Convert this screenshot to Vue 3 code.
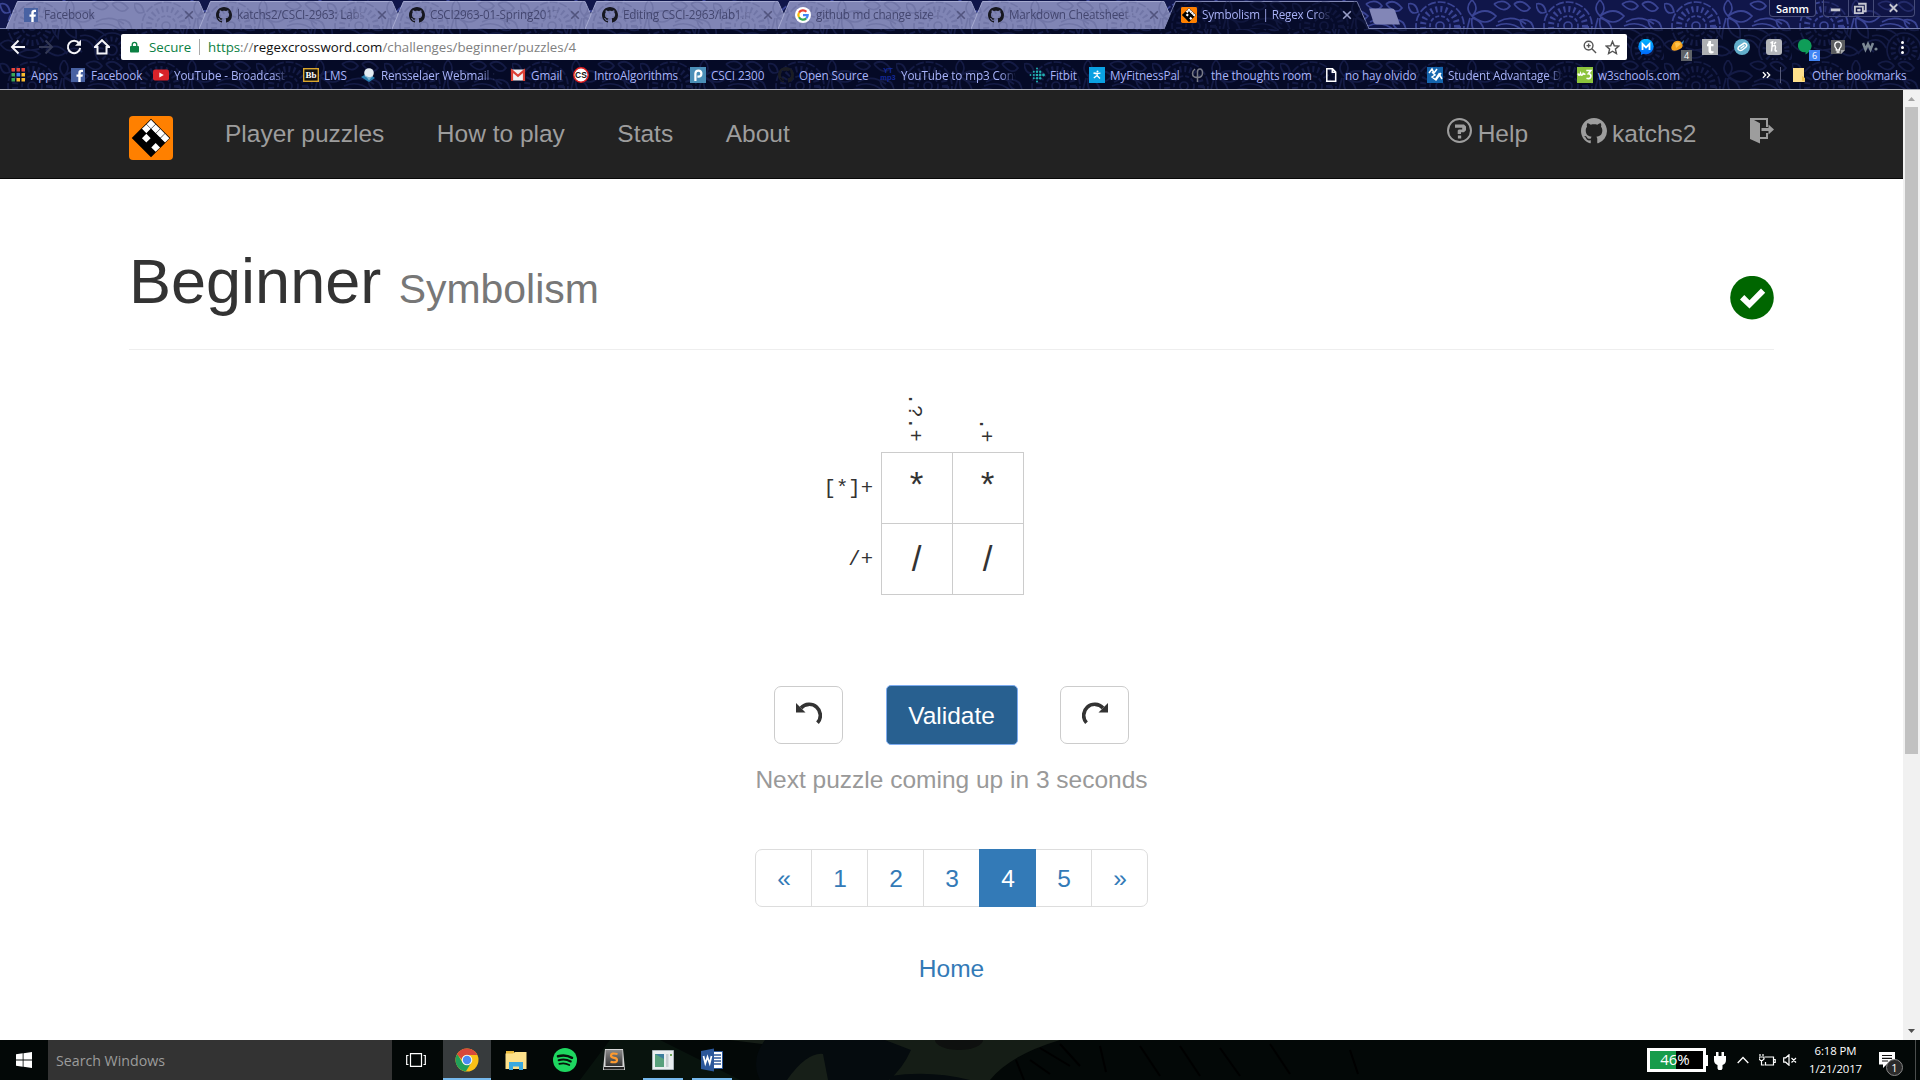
<script setup>
const tabs = [
  { icon: 'facebook', title: 'Facebook' },
  { icon: 'github', title: 'katchs2/CSCI-2963: Labs' },
  { icon: 'github', title: 'CSCI2963-01-Spring2017' },
  { icon: 'github', title: 'Editing CSCI-2963/lab1.md' },
  { icon: 'google', title: 'github md change size i' },
  { icon: 'github', title: 'Markdown Cheatsheet ·' },
  { icon: 'regex', title: 'Symbolism | Regex Crossword', active: true },
]
const bookmarks = [
  { icon: 'apps', label: 'Apps', w: 60 },
  { icon: 'facebook', label: 'Facebook', w: 83 },
  { icon: 'youtube', label: 'YouTube - Broadcast Y', w: 150, cut: true },
  { icon: 'bb', label: 'LMS', w: 57 },
  { icon: 'rpi', label: 'Rensselaer Webmail ::', w: 150, cut: true },
  { icon: 'gmail', label: 'Gmail', w: 63 },
  { icon: 'cs', label: 'IntroAlgorithms', w: 117 },
  { icon: 'piazza', label: 'CSCI 2300', w: 88 },
  { icon: 'darkhub', label: 'Open Source', w: 102 },
  { icon: 'ytmp3', label: 'YouTube to mp3 Conv', w: 149, cut: true },
  { icon: 'fitbit', label: 'Fitbit', w: 60 },
  { icon: 'mfp', label: 'MyFitnessPal', w: 101 },
  { icon: 'phi', label: 'the thoughts room', w: 134 },
  { icon: 'page', label: 'no hay olvido', w: 103 },
  { icon: 'student', label: 'Student Advantage Dis', w: 150, cut: true },
  { icon: 'w3', label: 'w3schools.com', w: 130 },
]
const extensions = [
  { icon: 'messenger' },
  { icon: 'honeybee', badge: '4', color: '#5f6368' },
  { icon: 'tumblr' },
  { icon: 'swirl' },
  { icon: 'honey' },
  { icon: 'hangouts', badge: '6', color: '#4285f4' },
  { icon: 'bulb' },
  { icon: 'wdot' },
]
const links = ['Player puzzles', 'How to play', 'Stats', 'About']
const cols = ['.?.+', '.+']
const rows = [
  { clue: '[*]+', cells: ['*', '*'] },
  { clue: '/+', cells: ['/', '/'] },
]
const pages = ['«', '1', '2', '3', '4', '5', '»']
const W = 1
const B = 0
const logoCells = [
  [W, W, B, B],
  [W, B, W, B],
  [W, B, B, B],
  [W, B, W, B],
]
const diamonds = logoCells.flatMap((r, a) => r.map((v, b) => ({ v, x: a * 6.6, y: b * 6.6 })))
const apps = [
  { icon: 'chrome', state: 'focus' },
  { icon: 'explorer' },
  { icon: 'spotify' },
  { icon: 'sublime' },
  { icon: 'window', state: 'open' },
  { icon: 'word', state: 'open' },
]
</script>

<template>
  <div class="screen">
    <svg class="defs" aria-hidden="true">
      <defs>
        <pattern v-for="p in [['dim', '#141b45'], ['lit', '#3a4494'], ['tabs', '#6b70a1']]" :id="'floral-' + p[0]" :key="p[0]" width="128" height="60" patternUnits="userSpaceOnUse">
          <g fill="none" :stroke="p[1]" stroke-width="1.7">
            <circle cx="32" cy="26" r="4" />
            <circle cx="32" cy="26" r="10" stroke-dasharray="4 2" />
            <circle cx="32" cy="26" r="17" stroke-width="6" stroke-dasharray="2 3" />
            <circle cx="32" cy="26" r="24" stroke-dasharray="8 2" />
            <path d="M64 0q8 8 0 16q-8-8 0-16M64 16q14-10 24 0q-10 12-24 0M64 18q14 4 12 20q-14-4-12-20M62 18q-4 14-4 20q-6-6-6-12M86 4q10-6 16 2q-6 8-16-2M90 22q14-8 28 2M88 26q14-6 26 4M84 30q12-4 22 6M80 36q10-3 18 6M76 42q12-6 18 6" />
            <circle cx="112" cy="50" r="5" /><circle cx="112" cy="50" r="11" stroke-width="5" stroke-dasharray="2 3" /><circle cx="112" cy="50" r="17" />
            <path d="M0 44q10-8 16 2q-6 10-16-2M18 54q12-8 22 0q-8 8-22 0M46 50q10-8 20 2q-8 8-20-2M106 4q8-6 16 4q-6 8-16-4M112 20q12-2 14 10q-12 2-14-10M0 4q8-2 10 8q-8 4-10-8M66 54q6-10 16-2" />
          </g>
        </pattern>
        <linearGradient id="gMsg" x1="0" y1="0" x2="0" y2="1"><stop offset="0" stop-color="#00b8ff" /><stop offset="1" stop-color="#0068ff" /></linearGradient>
        <linearGradient id="gSub" x1="0" y1="0" x2="0" y2="1"><stop offset="0" stop-color="#8a8a8a" /><stop offset="1" stop-color="#333" /></linearGradient>
      </defs>
      <symbol id="github" viewBox="0 0 16 16"><path fill="currentColor" d="M8 0C3.58 0 0 3.58 0 8c0 3.54 2.29 6.53 5.47 7.59.4.07.55-.17.55-.38 0-.19-.01-.82-.01-1.49-2.01.37-2.53-.49-2.69-.94-.09-.23-.48-.94-.82-1.13-.28-.15-.68-.52-.01-.53.63-.01 1.08.58 1.23.82.72 1.21 1.87.87 2.33.66.07-.52.28-.87.51-1.07-1.78-.2-3.64-.89-3.64-3.95 0-.87.31-1.59.82-2.15-.08-.2-.36-1.02.08-2.12 0 0 .67-.21 2.2.82.64-.18 1.32-.27 2-.27.68 0 1.36.09 2 .27 1.53-1.04 2.2-.82 2.2-.82.44 1.1.16 1.92.08 2.12.51.56.82 1.27.82 2.15 0 3.07-1.87 3.75-3.65 3.95.29.25.54.73.54 1.48 0 1.07-.01 1.93-.01 2.2 0 .21.15.46.55.38A8.013 8.013 0 0016 8c0-4.42-3.58-8-8-8z" /></symbol>
      <symbol id="darkhub" viewBox="0 0 16 16"><use href="#github" width="16" height="16" color="#1b1d24" /></symbol>
      <symbol id="facebook" viewBox="0 0 16 16"><path fill="#4862a3" d="M1 1h14v14H1z" /><path fill="#fff" d="M8.300 15V9.800H6.500V7.600h1.800V6c0-2.100 1.200-3.200 3-3.200.9 0 1.700.1 1.700.1v2h-1c-1 0-1.300.6-1.300 1.200v1.500h2.200l-.4 2.200h-1.800V15z" /></symbol>
      <symbol id="google" viewBox="0 0 16 16"><circle cx="8" cy="8" r="8" fill="#fff" /><g fill="none" stroke-width="2.200"><path stroke="#ea4335" d="M4 5.600A4.700 4.700 0 0 1 11.400 4.700" /><path stroke="#fbbc05" d="M4 10.300A4.700 4.700 0 0 1 4 5.600" /><path stroke="#34a853" d="M11.200 11.400A4.700 4.700 0 0 1 4 10.300" /><path stroke="#4285f4" d="M8 8.100h4.700A4.700 4.700 0 0 1 11.200 11.400" /></g></symbol>
      <symbol id="regex" viewBox="0 0 44 44">
        <rect width="44" height="44" rx="4" fill="#ff8000" />
        <g transform="translate(22 3.200) rotate(45)">
          <rect x="-.3" y="-.3" width="27.200" height="27.200" fill="#000" />
          <rect v-for="(d, i) in diamonds" :key="i" :x="d.x + .4" :y="d.y + .4" width="6.200" height="6.200" :fill="d.v ? '#fff' : '#000'" />
        </g>
      </symbol>
      <symbol id="apps" viewBox="0 0 16 16"><path fill="#e8453c" d="M1.500 1H5v3.500H1.500zM6.500 1H10v3.500H6.500zM11.500 1H15v3.500h-3.500z" /><path fill="#3aa757" d="M1.500 6H5v3.500H1.500zM1.500 11H5v3.500H1.500z" /><path fill="#4285f4" d="M6.500 6H10v3.500H6.500z" /><path fill="#f9bb2d" d="M11.500 6H15v3.500h-3.500zM6.500 11H10v3.500H6.500zM11.500 11H15v3.500h-3.500z" /></symbol>
      <symbol id="youtube" viewBox="0 0 16 16"><rect y="2.500" width="16" height="11" rx="2" fill="#d8232a" /><path fill="#fff" d="M6.300 5.500l4.500 2.500-4.500 2.500z" /></symbol>
      <symbol id="bb" viewBox="0 0 16 16"><rect x=".7" y="1.700" width="14.600" height="12.600" fill="#111" stroke="#d9a62e" stroke-width="1.400" /></symbol>
      <symbol id="rpi" viewBox="0 0 16 16"><path fill="#2a7fb0" d="M1 10l7-4 7 5-6 4z" /><circle cx="9" cy="6" r="4.800" fill="#e4edf3" /><path fill="#7fb3d0" d="M5 8q4 4 8 .5l-4 5z" /></symbol>
      <symbol id="gmail" viewBox="0 0 16 16"><path fill="#f2f2f2" d="M1 2.500h14v11H1z" /><path fill="none" stroke="#dc4236" stroke-width="2.200" d="M2 14V3.600l6 5.200 6-5.200V14" /></symbol>
      <symbol id="cs" viewBox="0 0 16 16"><circle cx="8" cy="8" r="7.200" fill="#fff" stroke="#e11f1f" stroke-width="1.500" /></symbol>
      <symbol id="piazza" viewBox="0 0 16 16"><path fill="#4b8fb8" d="M0 0h16v16H0z" /><path fill="none" stroke="#fff" stroke-width="2.200" d="M5.400 14V6.500a3 3 0 1 1 3 3.200h-1" /></symbol>
      <symbol id="ytmp3" viewBox="0 0 16 16"></symbol>
      <symbol id="fitbit" viewBox="0 0 16 16"><g fill="#22b0b2"><circle cx="8" cy="1.500" r="1" /><circle cx="8" cy="4.700" r="1.200" /><circle cx="8" cy="8" r="1.300" /><circle cx="8" cy="11.300" r="1.200" /><circle cx="8" cy="14.500" r="1" /><circle cx="11.200" cy="4.700" r="1.200" /><circle cx="11.200" cy="8" r="1.400" /><circle cx="11.200" cy="11.300" r="1.200" /><circle cx="4.800" cy="4.700" r="1" /><circle cx="4.800" cy="8" r="1.100" /><circle cx="4.800" cy="11.300" r="1" /><circle cx="14.500" cy="8" r="1.400" /><circle cx="1.500" cy="8" r=".9" /></g></symbol>
      <symbol id="mfp" viewBox="0 0 16 16"><path fill="#0aa1e2" d="M0 0h16v16H0z" /><circle cx="8.500" cy="4.600" r="1" fill="#fff" /><path stroke="#fff" stroke-width="1.300" fill="none" d="M4.500 6q4 1 7 0M8.200 6.500v2.300l2.800 2.700M8 8.500L4.800 11" /></symbol>
      <symbol id="phi" viewBox="0 0 16 16"><path fill="none" stroke="#777a86" stroke-width="1.500" d="M5 2Q2.500 4 2.500 6.500q0 4 5 4t5-4.500Q12.500 2 9.800 2 7.500 2 7.500 5v10" /></symbol>
      <symbol id="page" viewBox="0 0 16 16"><path fill="none" stroke="#fff" stroke-width="1.500" d="M2.800 1.800h5.700l3.200 3.200v9.200H2.800zM8.300 2v3.300h3.400" /></symbol>
      <symbol id="student" viewBox="0 0 16 16"><path fill="#1565ae" d="M0 0h16v16H0z" /><path fill="none" stroke="#fff" stroke-width="1.500" d="M2 6l3-4 2 4 3-4M5 5l3 3-3 2 4 3 5-7M8 13l4-6 3 5" /></symbol>
      <symbol id="w3" viewBox="0 0 16 16"><path fill="#8cc43c" d="M0 0h16v16H0z" /><path fill="none" stroke="#fff" stroke-width="1.700" d="M1 6.500q1 3.500 2.500 0q1 3.500 2.700 0q1 1 2.200.3M9.300 3.500h4.500l-2.500 3.200q3 .3 2.500 3-.8 2.800-4.300 1.600" /></symbol>
      <symbol id="messenger" viewBox="0 0 16 16"><circle cx="8" cy="7.500" r="7.700" fill="url(#gMsg)" /><path fill="#0072ff" d="M3 13v3l4-2z" /><path fill="none" stroke="#fff" stroke-width="1.800" d="M4.500 11V5L8 8.500 11.500 5v6" /></symbol>
      <symbol id="honeybee" viewBox="0 0 16 16"><path fill="#f5a11c" d="M4 3q5-3 8 1 2 4-2 6-5 3-8 1-2-3 2-8z" /><path fill="#ffc34d" d="M5 4q4-2 6 1l-5 4z" /><path fill="#3c8fc9" d="M11 4l3-3-1 4zM11 11l5 1-3 3z" /></symbol>
      <symbol id="tumblr" viewBox="0 0 16 16"><path fill="#aeb0b4" d="M0 0h16v16H0z" /><path fill="#fff" d="M6.500 2H9v3h2.500v2.300H9V11q0 1.700 2.500 1v2q-5 1.500-5-2.500V7.300H5V5.500q1.500-.7 1.500-3.500z" /></symbol>
      <symbol id="swirl" viewBox="0 0 16 16"><circle cx="8" cy="8" r="8" fill="#62aecb" /><path fill="none" stroke="#fff" stroke-width="1.500" d="M10.500 4L5 7.500q-2 2 0 3.500t4.500-1L12 8q1.500-2 0-3.200T8.500 5.500M6.500 9.500l4-3" /></symbol>
      <symbol id="honey" viewBox="0 0 16 16"><rect width="16" height="16" rx="3" fill="#b4b6ba" /><path fill="none" stroke="#fff" stroke-width="1.500" d="M4.500 4l2-1-1 9.500M5.500 8q4-3 4 0l-.4 3q0 1.500 2 .7M8 5l2-2" /></symbol>
      <symbol id="hangouts" viewBox="0 0 16 16"><path fill="#0f9d58" d="M7 0a6.600 6.600 0 0 1 6.600 6.600Q13.600 12 7.500 15.500v-2.400A6.600 6.600 0 1 1 7 0z" /></symbol>
      <symbol id="bulb" viewBox="0 0 16 16"><path fill="#5c5e61" d="M1 1h14v10l-4 4H1z" /><path fill="#a5a7aa" d="M15 11l-4 4v-4z" /><path fill="none" stroke="#fff" stroke-width="1.300" d="M6.300 9.500Q4.500 8 4.800 6a3.200 3.200 0 0 1 6.400 0q.2 2-1.700 3.500v1.500H6.300zM6.500 13h3" /></symbol>
      <symbol id="wdot" viewBox="0 0 16 16"><path fill="none" stroke="#7c8894" stroke-width="2.500" d="M1 4l2.500 6.500L6 5l2.500 5.500L11 4" /><circle cx="14" cy="10" r="1.600" fill="#7c8894" /></symbol>
      <symbol id="chrome" viewBox="0 0 24 24"><circle cx="12" cy="12" r="11.500" fill="#fbc116" /><path fill="#21a05a" d="M12 .5L2 6.300a11.500 11.500 0 0 0 8.800 17.100L16.400 14.600 12 12 7.500 14.500 2.300 5.900z" /><path fill="#d9483b" d="M2 6.300A11.500 11.500 0 0 1 22.300 7H12a5 5 0 0 0-5 4.500z" /><circle cx="12" cy="12" r="5.300" fill="#f4f4f4" /><circle cx="12" cy="12" r="4.200" fill="#4a8af4" /></symbol>
      <symbol id="explorer" viewBox="0 0 24 24"><path fill="#e9b93a" d="M2 3h8v4H2z" /><path fill="#fde08a" d="M1.500 5.500H9L11 4h11.500v17H1.500z" /><path fill="#39a9e0" d="M5 22v-8h14v8h-4v-3.500H9V22z" /></symbol>
      <symbol id="spotify" viewBox="0 0 24 24"><circle cx="12" cy="12" r="12" fill="#1ed760" /><g fill="none" stroke="#07130b" stroke-linecap="round"><path stroke-width="2.500" d="M5 8.300q7.500-2.300 14 1.500" /><path stroke-width="2.100" d="M5.700 12.200q6.500-1.900 12 1.300" /><path stroke-width="1.700" d="M6.300 15.900q5.500-1.500 10 1.100" /></g></symbol>
      <symbol id="sublime" viewBox="0 0 24 24"><path fill="#d6d6d6" d="M3 1h18l2 21H1z" /><path fill="url(#gSub)" d="M3.500 2h17v16h-17z" /><path fill="#222" d="M2 19h20v2.500H2z" /><path fill="none" stroke="#ff9a2e" stroke-width="2.200" d="M15.500 6Q9 4.500 9 7.500q0 2 3 2.300t3 2.400q0 3-6.500 1.600" /></symbol>
      <symbol id="window" viewBox="0 0 24 24"><path fill="#e9eef0" stroke="#a9b3b8" d="M1.500 2.500h21v19h-21z" /><path fill="#58a07c" d="M4 6h9v13H4z" /><path fill="#3c7d9d" d="M4 6h9v5z" /><path fill="#c6ced2" d="M15 6h2.500v13H15z" /><path fill="#6ea858" d="M19 6h2v2h-2z" /></symbol>
      <symbol id="word" viewBox="0 0 24 24"><path fill="#fff" stroke="#2b579a" d="M12 3.500h10.500v17H12z" /><path stroke="#2b579a" stroke-width="1.400" d="M14 7h7M14 10h7M14 13h7M14 16h7" /><path fill="#2b579a" d="M1 3l13-2.500v23L1 21z" /><path fill="none" stroke="#fff" stroke-width="1.700" d="M3.500 8l1.800 7.500L7.500 9l2.200 6.500L11.500 8" /></symbol>
    </svg>

    <header class="chrome">
      <svg class="paper"><rect width="1920" height="90" fill="url(#floral-dim)" /><rect width="1920" height="29" fill="#10164a" /><rect width="1920" height="29" fill="url(#floral-lit)" /></svg>
      <div class="strip">
        <div v-for="(t, i) in tabs" :key="i" class="tab" :class="{ active: t.active }">
          <svg class="shape" viewBox="0 0 205 29"><path d="M0 29L11.500 1.500H193L205 29" /><path class="tint" d="M0 29L11.500 1.500H193L205 29" /></svg>
          <svg class="fav"><use :href="'#' + t.icon" /></svg>
          <span class="title">{{ t.title }}</span>
          <svg class="x" viewBox="0 0 10 10"><path d="M1.200 1.200l7.600 7.600M8.800 1.200L1.200 8.800" /></svg>
        </div>
        <svg class="newtab" viewBox="0 0 34 17"><path d="M2 .5h23q2 0 3 2l5 14H10q-2.500 0-3.500-2z" /></svg>
        <div class="winctl">
          <span class="user">Samm</span>
          <div class="btns">
            <svg viewBox="0 0 25 17"><path d="M7 9h10v3H7z" /></svg>
            <svg viewBox="0 0 25 17"><path d="M9.500 4h8v8h-3M6 7h8.500v7H6z" class="ln" /><path d="M8.500 9.500h3.500v2.500H8.500z" /></svg>
            <svg viewBox="0 0 40 17"><path d="M15.500 4.500l8 8M23.500 4.500l-8 8" class="ln" /></svg>
          </div>
        </div>
      </div>

      <div class="toolbar">
        <svg viewBox="0 0 16 16" class="nav"><path d="M15 8H2.500M8.500 1.500L2 8l6.500 6.500" /></svg>
        <svg viewBox="0 0 16 16" class="nav dim"><path d="M1 8h12.500M7.500 1.500L14 8l-6.500 6.500" /></svg>
        <svg viewBox="0 0 16 16" class="nav"><path d="M13 4.200A6.200 6.200 0 1 0 14.200 9" /><path d="M15 .8v6H9z" class="solid" /></svg>
        <svg viewBox="0 0 16 16" class="nav"><path d="M8 1.200L1 8h2.500v6.500h9V8H15z" /></svg>
        <div class="omni">
          <svg class="lock" viewBox="0 0 10 12"><path fill="#0b8043" d="M1 5h8q1 0 1 1v5q0 1-1 1H1q-1 0-1-1V6q0-1 1-1z" /><path fill="none" stroke="#0b8043" stroke-width="1.500" d="M2.500 5V3.300a2.500 2.500 0 0 1 5 0V5" /></svg>
          <span class="secure">Secure</span><i class="bar"></i>
          <span class="url"><span class="green">https</span>://<b>regexcrossword.com</b>/challenges/beginner/puzzles/4</span>
          <svg class="mag" viewBox="0 0 15 15"><g fill="none" stroke="#555" stroke-width="1.500"><circle cx="6" cy="6" r="4.700" /><path d="M9.500 9.500l4.500 4.500M3.800 6h4.400M6 3.800v4.400" /></g></svg>
          <svg class="star" viewBox="0 0 16 16"><path fill="none" stroke="#555" stroke-width="1.500" d="M8 1.500l1.900 4.600 4.900.4-3.700 3.200 1.100 4.800L8 12l-4.200 2.500 1.100-4.800L1.200 6.500l4.900-.4z" /></svg>
        </div>
        <div class="exts">
          <div v-for="e in extensions" :key="e.icon" class="ext">
            <svg><use :href="'#' + e.icon" /></svg>
            <span v-if="e.badge" class="badge" :style="{ background: e.color }">{{ e.badge }}</span>
          </div>
        </div>
        <div class="dots"><i></i><i></i><i></i></div>
      </div>

      <div class="marks">
        <div v-for="b in bookmarks" :key="b.icon" class="mark" :style="{ width: b.w + 'px' }">
          <div class="mi">
            <svg><use :href="'#' + b.icon" /></svg>
            <b v-if="b.icon === 'bb'" class="tbb">Bb</b>
            <b v-if="b.icon === 'cs'" class="tcs">CS</b>
            <b v-if="b.icon === 'ytmp3'" class="tyt">YT<br />mp3</b>
          </div>
          <span :class="{ cut: b.cut }">{{ b.label }}</span>
        </div>
        <svg class="more" viewBox="0 0 10 8"><path d="M1 .8L4 4 1 7.200M5.500 .8l3 3.200-3 3.200" /></svg>
        <i class="sep"></i>
        <svg class="folder" viewBox="0 0 13 15"><path fill="#ffe08c" d="M0 1h11v10l1 4H0z" /><path fill="#f3c64f" d="M9 9l3 2v3H9z" /></svg>
        <span class="other">Other bookmarks</span>
      </div>
    </header>

    <div class="view">
      <div class="page">
        <nav class="navbar">
          <svg class="logo"><use href="#regex" /></svg>
          <a v-for="l in links" :key="l">{{ l }}</a>
          <div class="right">
            <a class="help"><svg viewBox="0 0 26 26"><circle cx="12.500" cy="12.500" r="11.500" fill="none" stroke="currentColor" stroke-width="2" /><path fill="currentColor" d="M8 6.500h9l2 2v3.800l-2 2h-3V16h-3.300v-3.500l1-1h3.500V9.700H8zM10.900 17.500h3.300v3h-3.300z" /></svg>Help</a>
            <a class="me"><svg><use href="#github" /></svg>katchs2</a>
            <a class="out"><svg viewBox="0 0 25 26"><path fill="currentColor" d="M1 0h18v9h-2V2H5l6 3.200V25.500L1 21z" /><path fill="currentColor" d="M11 19h6v-4h2v6h-8zM12.500 10h7V6.500l5.500 5-5.500 5V13h-7z" /></svg></a>
          </div>
        </nav>

        <main>
          <div class="heading">
            <h1>Beginner <small>Symbolism</small></h1>
            <svg class="done" viewBox="0 0 44 44"><circle cx="22" cy="21.700" r="21.800" fill="#060" /><path fill="#fff" d="M10 23.500l4.300-4.500 5.200 5.200L31 12.500l4.200 4.300L19.500 32.500z" /></svg>
          </div>

          <div class="puzzle">
            <i></i>
            <div v-for="c in cols" :key="c" class="colclue"><span>{{ c }}</span></div>
            <i></i>
            <template v-for="(r, y) in rows" :key="y">
              <div class="rowclue">{{ r.clue }}</div>
              <div v-for="(v, x) in r.cells" :key="x" class="cell" :class="{ high: v === '*' }">{{ v }}</div>
              <i></i>
            </template>
          </div>

          <div class="actions">
            <button class="btn"><svg viewBox="0 0 26 23"><path fill="none" stroke="#333" stroke-width="3.600" d="M5 6A11 11 0 0 1 21.500 20.800" /><path fill="#333" d="M0 1v9.500h9.500z" /></svg></button>
            <button class="btn primary">Validate</button>
            <button class="btn"><svg class="flip" viewBox="0 0 26 23"><path fill="none" stroke="#333" stroke-width="3.600" d="M5 6A11 11 0 0 1 21.500 20.800" /><path fill="#333" d="M0 1v9.500h9.500z" /></svg></button>
          </div>
          <p class="next">Next puzzle coming up in 3 seconds</p>
          <div class="pager"><a v-for="p in pages" :key="p" :class="{ on: p === '4' }">{{ p }}</a></div>
          <a class="home">Home</a>
        </main>
      </div>
      <div class="scroll">
        <svg viewBox="0 0 17 17"><path fill="#a3a3a3" d="M5 11l3.500-4 3.500 4z" /></svg>
        <i class="thumb"></i>
        <svg viewBox="0 0 17 17"><path fill="#505050" d="M5 6l3.500 4L12 6z" /></svg>
      </div>
    </div>

    <footer class="taskbar">
      <svg class="wall" viewBox="0 0 1920 40"><path fill="#0b1a12" d="M610 0h50l80 40H580z" opacity=".6" /><path fill="#151d16" d="M730 0h330q-50 15-70 40H790q10-20 20-30z" /><path fill="#050b0e" d="M765 0h120l26 10q-8 18-22 30H760q-10-20 5-40zM890 36q40-6 80 4h-80z" /><ellipse cx="959" cy="0" rx="24" ry="10" fill="#0e100f" /><path fill="#171f18" d="M787 40q20-28 36-26l5 26z" /><path stroke="#000" stroke-width="2" fill="none" d="M1016 20l8 20M1030 20l20 14M1040 8l30 18M1060 4l20 22M1100 6l6 26M1140 6l20 30M1180 6l20 30M1220 8l20 28M1270 4l20 30M1350 10l8 24" /></svg>
      <div class="start"><svg viewBox="0 0 16 16"><path fill="#fff" d="M0 2.200l6.700-.9v6.300H0zM7.500 1.200L16 0v7.600H7.500zM0 8.400h6.700v6.300L0 13.800zM7.500 8.400H16V16l-8.500-1.200z" /></svg></div>
      <div class="search">Search Windows</div>
      <div class="taskview"><svg viewBox="0 0 20 14"><path fill="none" stroke="#fff" stroke-width="1.200" d="M4.500.6h11v12.800h-11zM2.500 2.500H.7v9h1.800M17.500 2.500h1.800v9h-1.800" /></svg></div>
      <div v-for="a in apps" :key="a.icon" class="app" :class="a.state"><svg><use :href="'#' + a.icon" /></svg></div>
      <div class="tray">
        <div class="battery"><span>46%</span></div><i class="nub"></i>
        <svg class="plug" viewBox="0 0 12 18"><path fill="#fff" d="M2 0h2.500v4h3V0H10v4h2v4q0 4-3.500 5v3.500l-1 1.500h-3l-1-1.500V13Q0 12 0 8V4h2z" /></svg>
        <svg class="chev" viewBox="0 0 12 8"><path fill="none" stroke="#fff" stroke-width="1.300" d="M.7 7L6 1.500 11.300 7" /></svg>
        <svg class="bat" viewBox="0 0 17 12"><path fill="none" stroke="#fff" stroke-width="1.200" d="M6 3h8.500v8H6.500V8M14.500 5.500h1.700v3h-1.700M1 0v2M4 0v2M0 3h5v2L3.500 6.500h-2L0 5zM2.500 6.500V11h3" /></svg>
        <svg class="spk" viewBox="0 0 14 12"><path fill="none" stroke="#fff" stroke-width="1.200" d="M.7 3.800h2L6 .8v10.400L2.700 8.200h-2zM8.500 4l4.500 4.500M13 4L8.500 8.500" /></svg>
        <div class="clock"><span>6:18 PM</span><span>1/21/2017</span></div>
        <div class="notes"><svg viewBox="0 0 16 16"><path fill="#fff" d="M0 0h16v12.500H7.500L4 16v-3.500H0z" /><path stroke="#111" stroke-width="1.200" d="M3 3.500h10M3 6.300h10M3 9h6" /></svg><span>1</span></div>
      </div>
    </footer>
  </div>
</template>

<style>
body { margin: 0; overflow: hidden; }
</style>

<style scoped>
* { box-sizing: border-box; }
svg { display: block; flex: none; }
i { font-style: normal; }
.screen { width: 1920px; height: 1080px; display: flex; flex-direction: column; overflow: hidden; background: #fff; font-family: "Liberation Sans", Arial, sans-serif; }
.defs { position: absolute; width: 0; height: 0; }

.chrome { position: relative; height: 90px; flex: none; background: #050a26; border-bottom: 1px solid #a9abb5; font-family: "Open Sans", "Noto Sans", sans-serif; font-size: 11.7px; letter-spacing: -.1px; }
.paper { position: absolute; left: 0; top: 0; width: 1920px; height: 89px; }
.strip { position: relative; display: flex; height: 29px; padding-left: 6px; border-bottom: 1px solid #7880b0; }
.tab { position: relative; display: flex; align-items: center; width: 205px; height: 29px; margin-right: -12px; padding: 1px 0 0 17px; color: #43466f; letter-spacing: -.2px; }
.shape { position: absolute; left: 0; top: 0; width: 205px; height: 29px; }
.shape path { fill: #8085b5; stroke: #a5aad0; stroke-width: 1; }
.shape .tint { fill: url(#floral-tabs); stroke: none; opacity: .7; }
.active .shape path { fill: #060b2a; stroke: #8288b5; }
.active .shape .tint { fill: url(#floral-dim); stroke: none; }
.active { color: #a8b0f5; }
.fav { position: relative; width: 16px; height: 16px; color: #16171f; }
.title { position: relative; top: -1px; width: 130px; margin: 0 10px 0 5px; overflow: hidden; white-space: nowrap; mask-image: linear-gradient(90deg, #000 112px, transparent 130px); }
.x { position: relative; width: 10px; height: 10px; }
.x path { stroke: #51547e; stroke-width: 1.6; }
.active .x path { stroke: #9a9fc8; }
.newtab { width: 34px; height: 17px; margin: 8px 0 0 10px; fill: #8286b7; }
.winctl { display: flex; height: 17px; margin-left: auto; margin-right: 5px; gap: 7px; }
.user { width: 47px; height: 17px; border: 1px solid #454b78; border-top: 0; border-radius: 0 0 4px 4px; background: #0d1240; color: #fff; font-size: 11px; font-weight: 600; line-height: 18px; text-align: center; }
.btns { display: flex; border: 1px solid #454b78; border-top: 0; border-radius: 0 0 4px 4px; background: #0d124080; }
.btns svg { width: 25px; height: 16px; border-right: 1px solid #454b78; fill: #c4c5cf; }
.btns svg:nth-child(3) { width: 40px; border: 0; }
.btns .ln { fill: none; stroke: #c4c5cf; stroke-width: 2; }

.toolbar { position: relative; display: flex; align-items: center; height: 36px; padding-left: 10px; letter-spacing: 0; }
.nav { width: 16px; height: 16px; margin-right: 12px; fill: none; stroke: #f4f4f8; stroke-width: 2; }
.nav .solid { fill: #f4f4f8; stroke: none; }
.dim { stroke: #343955; }
.omni { display: flex; align-items: center; width: 1506px; height: 26px; margin-left: -1px; padding-left: 9px; background: #fff; border-radius: 2px; font-size: 13.3px; color: #808080; white-space: nowrap; }
.lock { width: 9px; height: 12px; }
.secure { width: 50px; margin-left: 10px; color: #0b8043; }
.bar { width: 1px; height: 16px; background: #aaa; }
.url { margin-left: 8px; }
.url b { font-weight: 400; color: #111; }
.green { color: #0b8043; }
.mag { width: 14px; height: 14px; margin-left: auto; }
.star { width: 15px; height: 15px; margin: 0 7px 0 8px; }
.exts { display: flex; gap: 16px; margin-left: 11px; }
.ext { position: relative; }
.ext svg { width: 16px; height: 16px; }
.badge { position: absolute; left: 11px; top: 11px; width: 11px; height: 11px; font-size: 9px; line-height: 11px; text-align: center; color: #fff; }
.dots { display: flex; flex-direction: column; gap: 2px; margin-left: 23px; }
.dots i { width: 3px; height: 3px; border-radius: 2px; background: #fff; }

.marks { position: relative; display: flex; align-items: center; height: 19px; padding-left: 10px; color: #a9b4fa; white-space: nowrap; }
.mark { display: flex; align-items: center; gap: 5px; flex: none; }
.mi { position: relative; width: 16px; height: 16px; }
.mi svg { width: 16px; height: 16px; }
.mi b { position: absolute; left: 0; top: 0; width: 16px; text-align: center; letter-spacing: 0; }
.tbb { font: 700 9px/16px "Liberation Serif", serif; color: #fff; }
.tcs { font: 700 8.5px/16px "Liberation Sans", sans-serif; color: #111; }
.tyt { font: 700 7.500px/7.500px "Liberation Sans", sans-serif; color: #14299a; }
.cut { width: 115px; overflow: hidden; mask-image: linear-gradient(90deg, #000 99px, transparent 115px); }
.more { width: 9px; height: 8px; margin-left: 55px; fill: none; stroke: #fff; stroke-width: 1.6; }
.sep { width: 1px; height: 16px; margin: 0 12px 0 9px; background: #565a78; }
.folder { width: 13px; height: 15px; }
.other { margin-left: 6px; }

.view { display: flex; height: 950px; flex: none; }
.page { width: 1903px; font-size: 24.5px; line-height: 35px; color: #333; }
.navbar { display: flex; height: 89px; padding: 26px 129px 0; background: #222; border-bottom: 1px solid #080808; color: #9d9d9d; }
.navbar a { margin-left: 52.5px; }
.logo { width: 44px; height: 44px; }
.logo + a { margin-left: 52px; }
.right { display: flex; margin-left: auto; }
.right a { display: flex; }
.right svg { margin-top: 2px; }
.help svg { width: 26px; height: 26px; margin-right: 5px; }
.me svg { width: 26px; height: 26px; margin-right: 5.5px; }
.out svg { width: 25px; height: 26px; }

main { display: flex; flex-direction: column; align-items: center; }
.heading { display: flex; align-items: flex-start; justify-content: space-between; width: 1645px; height: 171px; padding-top: 68px; border-bottom: 1px solid #eee; }
h1 { margin: 0; font-size: 63px; line-height: 69.3px; font-weight: 400; }
small { font-size: 40.95px; color: #777; }
.done { width: 44px; height: 44px; margin-top: 29px; }
.puzzle { display: grid; grid-template-columns: 120px 71px 72px 118px; grid-template-rows: 102px 71px 72px; }
.colclue { display: flex; justify-content: center; align-items: flex-end; padding: 0 6px 10px 0; font: 20.3px/24px "Liberation Mono", monospace; }
.colclue span { writing-mode: vertical-rl; text-orientation: sideways; }
.rowclue { padding: 0 8px 0 0; text-align: right; font: 20.6px/73px "Liberation Mono", monospace; }
.cell { padding-right: 1px; border: solid #ccc; border-width: 1px 0 0 1px; text-align: center; font-size: 35px; line-height: 70px; }
.high { line-height: 62px; }
.cell:nth-child(7), .cell:nth-child(11) { border-right-width: 1px; }
.cell:nth-child(10), .cell:nth-child(11) { border-bottom-width: 1px; }
.actions { display: flex; align-items: center; gap: 42.5px; height: 60px; margin-top: 90px; }
.btn { display: flex; justify-content: center; width: 69px; height: 58px; padding: 15px 0 0; background: #fff; border: 1px solid #ccc; border-radius: 7px; font: inherit; }
.btn svg { width: 26px; height: 23px; }
.flip { transform: scaleX(-1); }
.primary { width: 132px; height: 60px; padding: 12px 0 0; background: #286090; border: 1px solid #7eacf0; border-radius: 5px; color: #fff; line-height: 35px; }
.next { margin: 17px 0 0; color: #999; }
.pager { display: flex; margin-top: 52px; height: 58px; color: #337ab7; }
.pager a { width: 57px; margin-right: -1px; padding: 11px 0 0 1px; text-align: center; border: 1px solid #ddd; }
.pager a:first-child { border-radius: 7px 0 0 7px; }
.pager a:last-child { margin-right: 0; border-radius: 0 7px 7px 0; }
.pager .on { position: relative; background: #337ab7; border-color: #337ab7; color: #fff; }
.home { margin-top: 44px; color: #337ab7; }
.scroll { display: flex; flex-direction: column; width: 17px; background: #f1f1f1; }
.scroll svg { width: 17px; height: 17px; }
.thumb { width: 13px; height: 647px; margin: 0 2px auto; background: #c1c1c1; }

.taskbar { position: relative; display: flex; height: 40px; flex: none; background: #030807; font-family: "Open Sans", "Noto Sans", sans-serif; color: #fff; }
.wall { position: absolute; left: 0; top: 0; width: 1920px; height: 40px; }
.start, .search, .taskview, .app, .tray { position: relative; display: flex; align-items: center; }
.start { width: 48px; padding-left: 16px; }
.start svg { width: 16px; height: 16px; }
.search { width: 344px; padding-left: 8px; background: #333; color: #9c9c9c; font-size: 14.2px; }
.taskview { width: 51px; padding-left: 14px; }
.taskview svg { width: 20px; height: 14px; }
.app { justify-content: center; width: 48px; margin-right: 1px; border-bottom: 2px solid transparent; }
.app svg { width: 24px; height: 24px; margin-top: 1px; }
.focus { background: #373b3d; border-color: #76b9ed; }
.open::after { content: ""; position: absolute; left: 4px; bottom: -2px; width: 40px; height: 2px; background: #76b9ed; }
.tray { flex: 1; justify-content: flex-end; padding-right: 4px; }
.tray::after { content: ""; width: 1px; height: 40px; background: #4a4d4c; }
.battery { width: 59px; height: 24px; border: 3px solid #fff; background: linear-gradient(90deg, #179c4b 26px, #000 26px); font-size: 15px; line-height: 17px; text-align: center; }
.battery span { margin-right: 3px; }
.nub { width: 2px; height: 11px; background: #fff; }
.plug { width: 12px; height: 18px; margin: 1px 11px 0 6px; }
.chev { width: 12px; height: 8px; margin-right: 10px; }
.bat { width: 17px; height: 12px; margin-right: 7px; }
.spk { width: 14px; height: 12px; margin-right: 12px; }
.clock { display: flex; flex-direction: column; width: 53px; align-items: center; font-size: 11.4px; letter-spacing: -.1px; line-height: 18px; white-space: nowrap; }
.notes { position: relative; width: 16px; margin: 0 20px 0 17px; }
.notes svg { width: 16px; height: 16px; }
.notes span { position: absolute; left: 7px; top: 7px; width: 17px; height: 17px; border: 1px solid #888; border-radius: 50%; background: #2b2b2b; font-size: 11px; line-height: 15px; text-align: center; }
</style>
